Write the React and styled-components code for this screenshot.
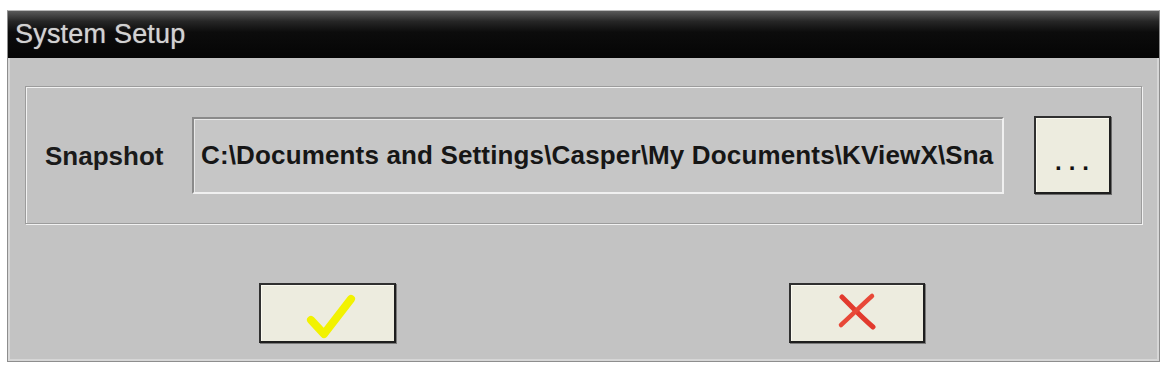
import React from 'react'
import styled, { createGlobalStyle } from 'styled-components'

const GlobalStyle = createGlobalStyle`
  html, body {
    margin: 0;
    padding: 0;
    background: #ffffff;
  }
  body {
    font-family: "Liberation Sans", Arial, sans-serif;
  }
`

const Page = styled.div`
  padding: 10px 0 0 7px;
`

const Window = styled.div`
  width: 1153px;
  height: 352px;
  box-sizing: border-box;
  background: #c3c3c3;
  border: 1px solid #8e8e8e;
  border-top-color: #b8b8b8;
  box-shadow: inset 2px 0 0 #dadada, inset -2px -2px 0 #d6d6d6;
  display: flex;
  flex-direction: column;
`

const TitleBar = styled.div`
  height: 47px;
  display: flex;
  align-items: center;
  padding-left: 7px;
  background: linear-gradient(to bottom, #5a5a5a 0%, #262626 22%, #0c0c0c 45%, #050505 100%);
  color: #d2d2d2;
  font-size: 27px;
  letter-spacing: 0.2px;
  text-shadow: 0 0 1px #9a9a9a;
`

const Body = styled.div`
  flex: 1;
  padding: 28px 17px 0 17px;
  display: flex;
  flex-direction: column;
`

const GroupBox = styled.div`
  height: 138px;
  box-sizing: border-box;
  border: 1px solid #9c9c9c;
  box-shadow: inset 1px 1px 0 #f2f2f2, 1px 1px 0 #f2f2f2;
  display: flex;
  align-items: center;
  padding: 0 30px 0 19px;
`

const Label = styled.div`
  width: 147px;
  font-size: 26px;
  font-weight: bold;
  color: #1a1a1a;
  margin-top: 2px;
`

const PathField = styled.div`
  width: 812px;
  height: 77px;
  box-sizing: border-box;
  display: flex;
  align-items: center;
  padding: 0 6px 0 7px;
  background: #c6c6c6;
  border: 2px solid;
  border-color: #8a8a8a #f0f0f0 #f0f0f0 #8a8a8a;
  box-shadow: inset 1px 1px 0 #e8e8e8;
  white-space: nowrap;
  font-size: 26px;
  font-weight: bold;
  letter-spacing: 0.15px;
  color: #161616;
`

const BrowseButton = styled.button`
  margin-left: 30px;
  width: 77px;
  height: 78px;
  box-sizing: border-box;
  background: #edecdf;
  border: 2px solid #303030;
  border-right-color: #1e1e1e;
  border-bottom-color: #1e1e1e;
  box-shadow: inset 1px 1px 0 #fbfaf0, 1px 1px 0 #6a6a6a;
  padding: 14px 0 0 6px;
  font-family: "Liberation Sans", Arial, sans-serif;
  font-size: 24px;
  font-weight: bold;
  letter-spacing: 7px;
  color: #111;
  cursor: pointer;
`

const ButtonRow = styled.div`
  display: flex;
  margin-top: 59px;
  padding-left: 234px;
  gap: 393px;
`

const ActionButton = styled.button`
  width: ${p => p.$w}px;
  height: 60px;
  box-sizing: border-box;
  background: #edecdf;
  border: 2px solid #303030;
  border-right-color: #1e1e1e;
  border-bottom-color: #1e1e1e;
  box-shadow: inset 1px 1px 0 #fbfaf0, 1px 1px 0 #7a7a7a;
  padding: 0;
  display: flex;
  align-items: center;
  justify-content: center;
  overflow: visible;
  cursor: pointer;
`

const CheckMark = () => (
  <svg width="60" height="58" viewBox="0 0 60 58" style={{ marginTop: 8, marginRight: 2, overflow: 'visible' }}>
    <path d="M14 32 L27 46 L54 11" fill="none" stroke="#f2f200" strokeWidth="8" strokeLinecap="round" strokeLinejoin="round" />
  </svg>
)

const CrossMark = () => (
  <svg width="40" height="38" viewBox="0 0 40 38" style={{ marginBottom: 4 }}>
    <path d="M5 5 C14 14 24 25 36 35" fill="none" stroke="#e23a2e" strokeWidth="5" strokeLinecap="round" />
    <path d="M35 4 C26 12 15 23 4 33" fill="none" stroke="#e84838" strokeWidth="4.5" strokeLinecap="round" />
  </svg>
)

export default function App() {
  return (
    <Page>
      <GlobalStyle />
      <Window>
        <TitleBar>System Setup</TitleBar>
        <Body>
          <GroupBox>
            <Label>Snapshot</Label>
            <PathField>C:\Documents and Settings\Casper\My Documents\KViewX\Sna</PathField>
            <BrowseButton>...</BrowseButton>
          </GroupBox>
          <ButtonRow>
            <ActionButton $w={137}><CheckMark /></ActionButton>
            <ActionButton $w={136}><CrossMark /></ActionButton>
          </ButtonRow>
        </Body>
      </Window>
    </Page>
  )
}
